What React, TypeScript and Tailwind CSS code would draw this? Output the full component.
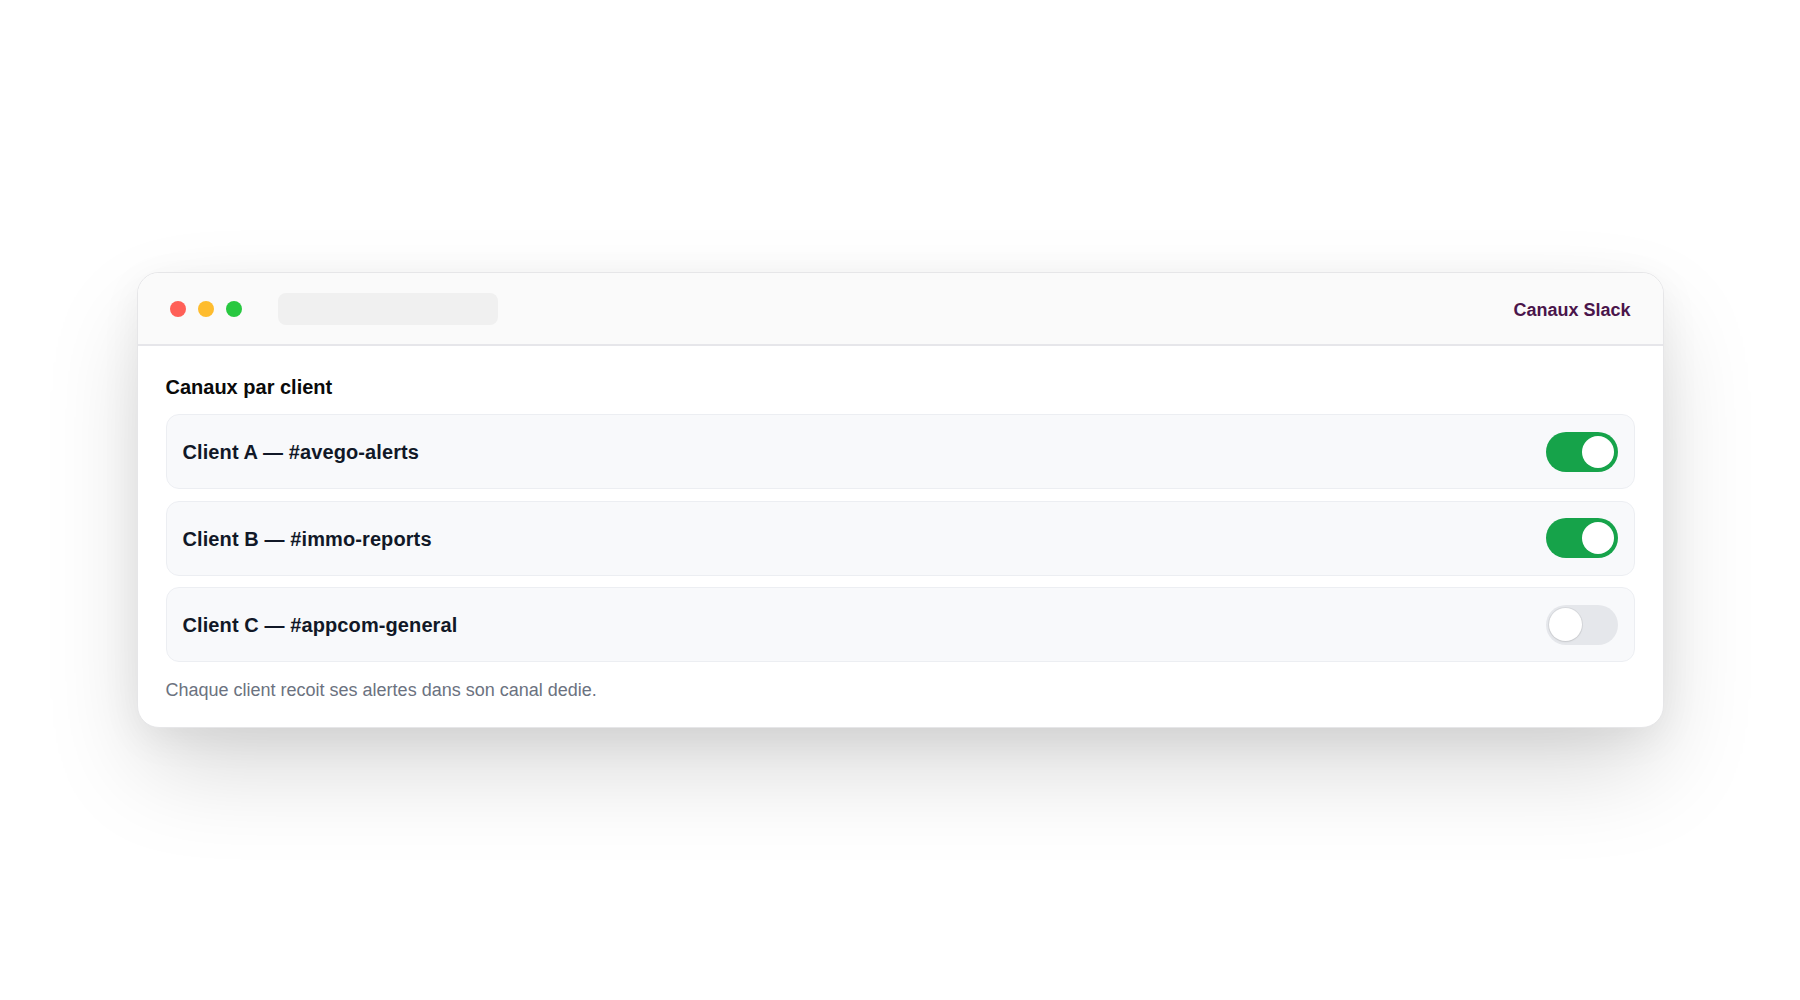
import React from "react";

type Row = { label: string; on: boolean };

const rows: Row[] = [
  { label: "Client A — #avego-alerts", on: true },
  { label: "Client B — #immo-reports", on: true },
  { label: "Client C — #appcom-general", on: false },
];

function Toggle({ on }: { on: boolean }) {
  return (
    <div
      className={
        on
          ? "flex h-[40px] w-[72px] items-center justify-end rounded-full bg-[#16a34a] px-[4px]"
          : "flex h-[40px] w-[72px] items-center justify-start rounded-full bg-[#e5e7eb] px-[3px]"
      }
    >
      <div
        className={
          on
            ? "h-[32px] w-[32px] rounded-full bg-white"
            : "h-[33px] w-[33px] rounded-full bg-white shadow-[0_0_0_1px_rgba(0,0,0,0.06),0_1px_2px_rgba(0,0,0,0.08)]"
        }
      />
    </div>
  );
}

export default function App() {
  return (
    <div
      className="flex h-[1000px] w-full items-center justify-center bg-white"
      style={{ fontFamily: '"Liberation Sans", Arial, Helvetica, sans-serif' }}
    >
      <div className="w-[1527px] overflow-hidden rounded-[22px] border border-[#e6e6e8] bg-white shadow-[0_45px_100px_-10px_rgba(0,0,0,0.17),0_10px_40px_rgba(0,0,0,0.06)]">
        <div className="flex h-[73px] items-center justify-between border-b-2 border-[#e6e6ea] bg-[#fafafa] px-8">
          <div className="flex items-center">
            <div className="flex items-center gap-[12px]">
              <span className="h-4 w-4 rounded-full bg-[#ff5f57]" />
              <span className="h-4 w-4 rounded-full bg-[#febc2e]" />
              <span className="h-4 w-4 rounded-full bg-[#28c840]" />
            </div>
            <div className="ml-[36px] h-[32px] w-[220px] rounded-lg bg-[#f0f0f0]" />
          </div>
          <div className="pt-[2px] text-[18px] font-bold leading-[28px] text-[#4a154b]">
            Canaux Slack
          </div>
        </div>
        <div className="px-[28px] pb-[23px] pt-[27px]">
          <div className="text-[20px] font-bold leading-[28px] text-[#0a0a0a]">
            Canaux par client
          </div>
          <div className="mt-[13px] flex flex-col gap-[11.5px]">
            {rows.map((r) => (
              <div
                key={r.label}
                className="flex h-[75px] items-center justify-between rounded-[13px] border-[1.5px] border-[#eceef2] bg-[#f8f9fb] pl-[16px] pr-[16px]"
              >
                <span className="pt-[1px] text-[20px] font-bold leading-[28px] tracking-[0.1px] text-[#111827]">
                  {r.label}
                </span>
                <Toggle on={r.on} />
              </div>
            ))}
          </div>
          <div className="mt-[13.5px] text-[18px] leading-[28px] text-[#6b7280]">
            Chaque client recoit ses alertes dans son canal dedie.
          </div>
        </div>
      </div>
    </div>
  );
}
